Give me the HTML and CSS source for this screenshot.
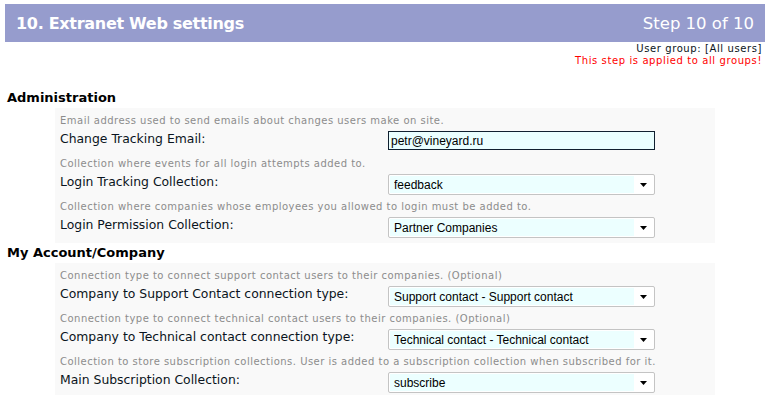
FILE: index.html
```html
<!DOCTYPE html>
<html>
<head>
    <title>Extranet Web settings</title>
    <link rel="stylesheet" href="styles.css">
</head>
<body>
    <div class="wizard-head">
        <h1>10. Extranet Web settings</h1>
        <span class="step">Step 10 of 10</span>
    </div>

    <div class="group-info">
        <div>User group: [All users]</div>
        <div class="warn">This step is applied to all groups!</div>
    </div>

    <!-- Administration -->
    <h2 class="section-title">Administration</h2>
    <div class="section">
        <div class="field">
            <div class="hint">Email address used to send emails about changes users make on site.</div>
            <div class="field-row">
                <label>Change Tracking Email:</label>
                <input type="text" class="text-input" value="petr@vineyard.ru">
            </div>
        </div>
        <div class="field">
            <div class="hint">Collection where events for all login attempts added to.</div>
            <div class="field-row">
                <label>Login Tracking Collection:</label>
                <div class="select">
                    <select><option>feedback</option></select>
                    <span class="select-arrow"><svg width="7" height="4" viewBox="0 0 7 4"><path d="M0 0h7L3.5 4z"/></svg></span>
                </div>
            </div>
        </div>
        <div class="field">
            <div class="hint">Collection where companies whose employees you allowed to login must be added to.</div>
            <div class="field-row">
                <label>Login Permission Collection:</label>
                <div class="select">
                    <select><option>Partner Companies</option></select>
                    <span class="select-arrow"><svg width="7" height="4" viewBox="0 0 7 4"><path d="M0 0h7L3.5 4z"/></svg></span>
                </div>
            </div>
        </div>
    </div>

    <!-- My Account/Company -->
    <h2 class="section-title">My Account/Company</h2>
    <div class="section">
        <div class="field">
            <div class="hint">Connection type to connect support contact users to their companies. (Optional)</div>
            <div class="field-row">
                <label>Company to Support Contact connection type:</label>
                <div class="select">
                    <select><option>Support contact - Support contact</option></select>
                    <span class="select-arrow"><svg width="7" height="4" viewBox="0 0 7 4"><path d="M0 0h7L3.5 4z"/></svg></span>
                </div>
            </div>
        </div>
        <div class="field">
            <div class="hint">Connection type to connect technical contact users to their companies. (Optional)</div>
            <div class="field-row">
                <label>Company to Technical contact connection type:</label>
                <div class="select">
                    <select><option>Technical contact - Technical contact</option></select>
                    <span class="select-arrow"><svg width="7" height="4" viewBox="0 0 7 4"><path d="M0 0h7L3.5 4z"/></svg></span>
                </div>
            </div>
        </div>
        <div class="field">
            <div class="hint">Collection to store subscription collections. User is added to a subscription collection when subscribed for it.</div>
            <div class="field-row">
                <label>Main Subscription Collection:</label>
                <div class="select">
                    <select><option>subscribe</option></select>
                    <span class="select-arrow"><svg width="7" height="4" viewBox="0 0 7 4"><path d="M0 0h7L3.5 4z"/></svg></span>
                </div>
            </div>
        </div>
    </div>
</body>
</html>
```

FILE: styles.css
```css
body {
    font-family: "DejaVu Sans", Verdana, sans-serif;
    color: #000;
    margin: 4px 3px 0 5px;
}
.wizard-head {
    display: flex;
    justify-content: space-between;
    align-items: center;
    height: 38px;
    padding: 0 11px;
    background-color: #969ccd;
    color: #fff;
}
.wizard-head h1 {
    margin: 0;
    font-size: 16px;
    letter-spacing: -0.3px;
    font-weight: bold;
}
.step {
    font-size: 16.5px;
}
.group-info {
    text-align: right;
    font-size: 10px;
    letter-spacing: 0.6px;
    line-height: 12px;
    padding: 1px 3px 0 0;
    color: #0a1420;
}
.warn {
    color: #f00;
}
.section-title {
    margin: 21px 0 0 2px;
    font-size: 13px;
    line-height: 20px;
}
.section + .section-title {
    margin-top: 0;
}
.section {
    margin-left: 50px;
    width: 660px;
    padding: 4px 0 2px;
    background-color: #f9f9f9;
}
.field {
    padding-left: 5px;
    margin-bottom: 4px;
}
.hint {
    padding-top: 2px;
    font-size: 10px;
    letter-spacing: 0.48px;
    line-height: 13px;
    color: #8c8c8c;
}
.field-row {
    display: grid;
    grid-template-columns: 328px 267px;
    align-items: start;
    height: 20px;
    margin-top: 4px;
}
.field-row label {
    padding-top: 1px;
    font-size: 12.4px;
    line-height: 14px;
    color: #0a1420;
}
.text-input {
    box-sizing: border-box;
    width: 267px;
    height: 19px;
    margin: 0;
    padding: 0 2px;
    border: 1px solid #102030;
    background-color: #eaffff;
    font-family: "Liberation Sans", Arial, sans-serif;
    font-size: 12px;
    outline: none;
}
.select {
    display: flex;
    box-sizing: border-box;
    height: 21px;
    padding: 1px;
    border: 1px solid #c4c4c4;
    border-radius: 2px;
    background-color: #fff;
}
.select select {
    flex: 1;
    appearance: none;
    -webkit-appearance: none;
    margin: 0;
    padding: 0 0 0 4px;
    border: none;
    background-color: #ecffff;
    font-family: "Liberation Sans", Arial, sans-serif;
    font-size: 12px;
    color: #000;
}
.select-arrow {
    display: flex;
    align-items: center;
    justify-content: center;
    width: 19px;
}
```
